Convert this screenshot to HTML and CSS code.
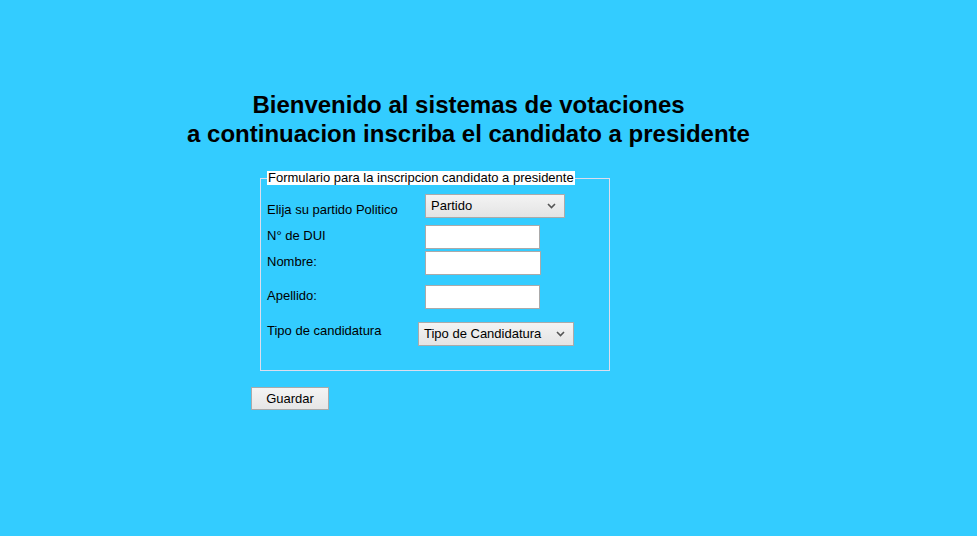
FILE: index.html
```html
<!DOCTYPE html>
<html>
<head>
<meta charset="utf-8">
<link rel="stylesheet" href="styles.css">
</head>
<body>
<div class="page">
  <h2 class="title">Bienvenido al sistemas de votaciones<br>a continuacion inscriba el candidato a presidente</h2>
  <form class="form">
    <fieldset class="box">
      <legend class="legend">Formulario para la inscripcion candidato a presidente</legend>
      <div class="row row-partido">
        <label class="lbl">Elija su partido Politico</label>
        <div class="sel sel-partido"><span>Partido</span><svg width="9" height="6" viewBox="0 0 9 6"><path d="M1 1 L4.5 4.5 L8 1" fill="none" stroke="#555" stroke-width="1.6"/></svg></div>
      </div>
      <div class="row row-dui">
        <label class="lbl">N° de DUI</label>
        <input class="inp" type="text">
      </div>
      <div class="row row-nombre">
        <label class="lbl">Nombre:</label>
        <input class="inp inp-wide" type="text">
      </div>
      <div class="row row-apellido">
        <label class="lbl">Apellido:</label>
        <input class="inp" type="text">
      </div>
      <div class="row row-tipo">
        <label class="lbl">Tipo de candidatura</label>
        <div class="sel sel-tipo"><span>Tipo de Candidatura</span><svg width="9" height="6" viewBox="0 0 9 6"><path d="M1 1 L4.5 4.5 L8 1" fill="none" stroke="#555" stroke-width="1.6"/></svg></div>
      </div>
    </fieldset>
    <button class="btn" type="button">Guardar</button>
  </form>
</div>
</body>
</html>
```

FILE: styles.css
```css
html, body {
  margin: 0;
  padding: 0;
  background: #33ccff;
  font-family: "Liberation Sans", Arial, sans-serif;
  color: #000;
}
.page {
  width: 937px;
  padding-top: 90px;
}
.title {
  margin: 0;
  text-align: center;
  font-size: 24px;
  line-height: 29px;
  font-weight: bold;
}
.form {
  margin: 23px 0 0 251px;
}
.box {
  margin: 0 0 0 9px;
  width: 350px;
  height: 200px;
  box-sizing: border-box;
  border: 1px solid #dde;
  padding: 9px 0 0 6px;
}
.legend {
  background: #fff;
  font-size: 13px;
  line-height: 14px;
  padding: 0 1px;
  margin-left: 0;
}
.row {
  display: flex;
  align-items: flex-start;
}
.lbl {
  font-size: 13px;
  width: 158px;
  flex: none;
}
.row-partido { height: 31px; }
.row-partido .lbl { padding-top: 8px; }
.row-dui { height: 26px; }
.row-dui .lbl { padding-top: 3px; }
.row-nombre { height: 34px; }
.row-nombre .lbl { padding-top: 3px; }
.row-apellido { height: 37px; }
.row-apellido .lbl { padding-top: 3px; }
.row-tipo .lbl { padding-top: 1px; width: 151px; }
.inp {
  width: 115px;
  height: 24px;
  box-sizing: border-box;
  border: 1px solid #aaa;
  background: #fff;
  margin: 0;
  padding: 0;
}
.inp-wide { width: 116px; }
.sel {
  box-sizing: border-box;
  height: 24px;
  border: 1px solid #aaa;
  background: linear-gradient(#f3f3f3, #e4e4e4);
  display: flex;
  align-items: center;
  justify-content: space-between;
  font-size: 13px;
  padding: 0 8px 1px 5px;
}
.sel-partido { width: 140px; }
.sel-tipo { width: 156px; }
.btn {
  margin: 16px 0 0 0;
  width: 78px;
  height: 23px;
  border: 1px solid #aaa;
  background: linear-gradient(#f4f4f4, #e6e6e6);
  font-family: "Liberation Sans", Arial, sans-serif;
  font-size: 13px;
  padding: 0;
  color: #000;
}
```
